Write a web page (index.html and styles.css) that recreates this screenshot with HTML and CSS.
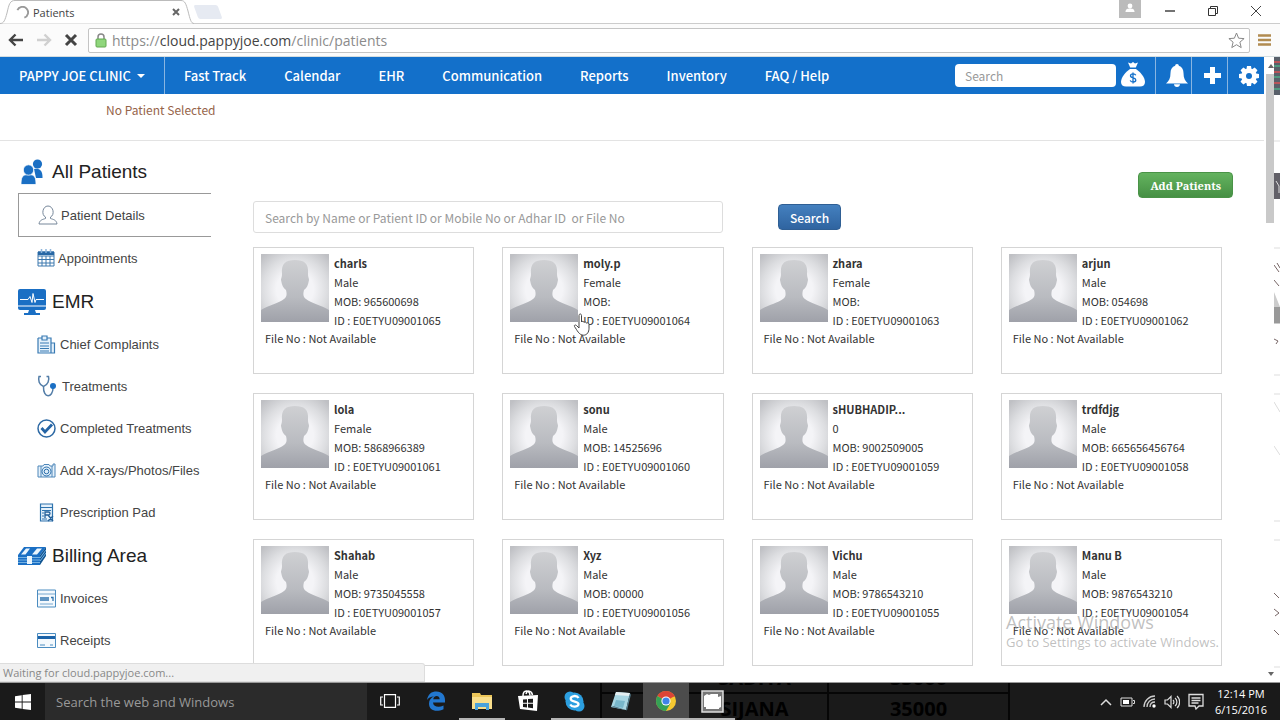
FILE: index.html
```html
<!DOCTYPE html>
<html lang="en">
<head>
<meta charset="utf-8">
<title>Patients</title>
<link rel="stylesheet" href="styles.css">
</head>
<body class="desktop">
<svg class="defs" aria-hidden="true">
  <defs>
    <radialGradient id="glow" cx="50%" cy="52%" r="68%"><stop offset="0.4" stop-color="#f4f4f7"/><stop offset="0.7" stop-color="#dcdde0"/><stop offset="1" stop-color="#bfc0c4"/></radialGradient>
    <linearGradient id="body" x1="0" y1="0" x2="0" y2="1"><stop offset="0" stop-color="#cfd0d3"/><stop offset="0.6" stop-color="#b9bbc0"/><stop offset="1" stop-color="#9fa1a9"/></linearGradient>
  </defs>
  <symbol id="avatar" viewBox="0 0 68 68"><rect width="68" height="68" fill="url(#glow)"/><path d="M0 68V56C8 51 18 49 23 45C26 43 26 40 25 36C22 34 21 31 20 26C20 24 21 23 21 20C20 9 25 6 34 6C43 6 48 9 47 20C47 23 48 24 48 26C47 31 46 34 43 36C42 40 42 43 45 45C50 49 60 51 68 56V68Z" fill="url(#body)"/></symbol>
</svg>

<div class="browser">
  <header class="tabs">
    <div class="tab">
      <svg class="tab-shape" viewBox="0 0 194 24" preserveAspectRatio="none"><path d="M0 23.500C4 23.500 5 20 7 13C9 4 10 .5 15 .5H181C185 .5 186 4 188 11C190 19 191 23.500 194 23.500" fill="#fff" stroke="#bbb"/></svg>
      <svg class="spinner" viewBox="0 0 14 14"><path d="M1.500 4.500A6 6 0 1 1 9 12.500" fill="none" stroke="#999" stroke-width="2"/></svg>
      <span>Patients</span>
      <button class="plain tab-close" aria-label="Close tab"><svg width="8" height="8" viewBox="0 0 8 8"><path d="M1 1l6 6M7 1l-6 6" stroke="#666" stroke-width="2"/></svg></button>
    </div>
    <button class="plain new-tab" aria-label="New tab"></button>
    <div class="window-buttons">
      <button class="plain user" aria-label="User"><svg width="22" height="18" viewBox="0 0 22 18"><rect width="22" height="18" fill="#bbb"/><circle cx="11" cy="6" r="2.400" fill="#fff"/><path d="M6.500 12c0-3 2-3.500 4.500-3.500s4.500.5 4.500 3.500z" fill="#fff"/></svg></button>
      <button class="plain" aria-label="Minimize"><svg width="12" height="12" viewBox="0 0 12 12"><path d="M1 6h10" stroke="#444" stroke-width="1.500"/></svg></button>
      <button class="plain" aria-label="Restore"><svg width="12" height="12" viewBox="0 0 12 12"><path d="M1.500 3.500h7v7h-7zM3.500 3V1.500h7v7H9" fill="none" stroke="#333"/></svg></button>
      <button class="plain" aria-label="Close"><svg width="12" height="12" viewBox="0 0 12 12"><path d="M1 1l10 10M11 1L1 11" stroke="#444"/></svg></button>
    </div>
  </header>

  <div class="toolbar">
    <button class="plain" aria-label="Back"><svg width="16" height="14" viewBox="0 0 16 14"><path d="M15 7H2M7.500 1.500L2 7l5.500 5.500" fill="none" stroke="#444" stroke-width="2.400"/></svg></button>
    <button class="plain" aria-label="Forward"><svg width="16" height="14" viewBox="0 0 16 14"><path d="M1 7h13M8.500 1.500L14 7l-5.500 5.500" fill="none" stroke="#d0d0d0" stroke-width="2.400"/></svg></button>
    <button class="plain" aria-label="Stop"><svg width="14" height="14" viewBox="0 0 14 14"><path d="M2 2l10 10M12 2L2 12" stroke="#444" stroke-width="3"/></svg></button>
    <div class="address">
      <svg width="12" height="15" viewBox="0 0 12 15"><path d="M3 7V4a3 3 0 0 1 6 0v3" fill="none" stroke="#888" stroke-width="1.500"/><rect x="1" y="6" width="10" height="8" rx="1" fill="#8fd67c" stroke="#62a850"/></svg>
      <span class="url"><i>https://</i>cloud.pappyjoe.com<i>/clinic/patients</i></span>
      <button class="plain" aria-label="Bookmark"><svg width="17" height="17" viewBox="0 0 17 17"><path d="M8.500 1l2.100 5.200 5.500.4-4.200 3.600 1.300 5.400-4.700-2.900-4.700 2.900 1.300-5.400L.9 6.600l5.500-.4z" fill="#fff" stroke="#888"/></svg></button>
    </div>
    <button class="plain menu" aria-label="Menu"><svg width="13" height="12" viewBox="0 0 13 12"><path d="M0 1.500h13M0 6h13M0 10.500h13" stroke="#b18b50" stroke-width="2.500"/></svg></button>
  </div>

  <div class="viewport">
    <div class="page">
      <nav class="nav">
        <button class="plain clinic">PAPPY JOE CLINIC <span class="caret"></span></button>
        <div class="links"><a href="#">Fast Track</a><a href="#">Calendar</a><a href="#">EHR</a><a href="#">Communication</a><a href="#">Reports</a><a href="#">Inventory</a><a href="#">FAQ / Help</a></div>
        <input class="nav-search" type="text" placeholder="Search" aria-label="Search">
        <button class="plain tool wide" aria-label="Payments"><svg width="26" height="26" viewBox="0 0 26 26"><path d="M8 1.500l3 1 2-1.500 2 1.500 3-1-2.200 5h-5.600z" fill="#fff"/><path d="M10 8h6c4 3 9 8 9 13 0 3-2 4.500-5 4.500H6c-3 0-5-1.500-5-4.500 0-5 5-10 9-13z" fill="#fff"/><path d="M15.800 14.200c-.5-1-1.500-1.300-2.700-1.300-1.500 0-2.600.7-2.600 1.900 0 2.900 5.300 1.300 5.300 4.200 0 1.200-1.100 2-2.700 2-1.400 0-2.500-.5-2.900-1.600M13 11.500v11" fill="none" stroke="#1370ca" stroke-width="1.300"/></svg></button>
        <button class="plain tool" aria-label="Notifications"><svg width="22" height="23" viewBox="0 0 22 23"><path d="M11 0c1.200 0 1.800.8 1.800 1.800C16 2.700 17.500 5.500 17.500 9c0 5 1.500 8 4.500 10.500H0C3 17 4.500 14 4.500 9c0-3.500 1.500-6.300 4.700-7.200C9.200.8 9.800 0 11 0zM8 20.300h6c0 1.500-1.300 2.700-3 2.700s-3-1.200-3-2.700z" fill="#fff"/></svg></button>
        <button class="plain tool" aria-label="Add"><svg width="19" height="19" viewBox="0 0 19 19"><path d="M7 1h5v6h6v5h-6v6H7v-6H1V7h6z" fill="#fff"/></svg></button>
        <button class="plain tool" aria-label="Settings"><svg width="20" height="20" viewBox="0 0 20 20"><g fill="#fff"><circle cx="10" cy="10" r="7.600"/><path id="tooth" d="M8 0h4l.7 4H7.300zM8 20h4l.7-4H7.300z"/><use href="#tooth" transform="rotate(45 10 10)"/><use href="#tooth" transform="rotate(90 10 10)"/><use href="#tooth" transform="rotate(135 10 10)"/></g><circle cx="10" cy="10" r="3" fill="#1370ca"/></svg></button>
      </nav>
      <div class="selection">No Patient Selected</div>

      <div class="content">
        <aside class="sidebar">
          <h2><svg width="28" height="26" viewBox="0 0 28 26"><g fill="#1a6fc4"><circle cx="19.500" cy="5" r="4.600"/><path d="M16 10c5-1 8.500 1 8.500 8v1H18z"/></g><g fill="#1a6fc4" stroke="#fff" stroke-width=".8"><path d="M3 25.500c0-7 1-10 7.500-10S18 18.500 18 25.500z"/><circle cx="10.500" cy="11" r="5.200"/></g></svg>All Patients</h2>
          <ul>
            <li><a class="active" href="#"><svg width="20" height="20" viewBox="0 0 20 20"><path d="M7.500 12C3 10 4.500 1 10 1s7 9 2.500 11v1.500c3 1 6 1.500 6.500 5.500H1c.5-4 3.500-4.500 6.500-5.500z" fill="none" stroke="#76879a"/></svg>Patient Details</a></li>
            <li><a href="#"><svg class="tight" width="18" height="18" viewBox="0 0 18 18"><path d="M1 3h16v14H1zM1 7h16M1 10.500h16M1 14h16M5 7v10M9 7v10M13 7v10" fill="none" stroke="#3c78ae"/><path d="M1 2.500h16V6H1z" fill="#2767a5"/><path d="M4.500 0v4M9 0v4M13.500 0v4" stroke="#8db5dc" stroke-width="1.500"/></svg>Appointments</a></li>
          </ul>
          <h2><svg width="28" height="26" viewBox="0 0 28 26"><path d="M2 0h24a2 2 0 0 1 2 2v17a2 2 0 0 1-2 2H2a2 2 0 0 1-2-2V2a2 2 0 0 1 2-2zM11 21h6l1 3h4v2H6v-2h4z" fill="#1a6fc4"/><path d="M2 10.500h8l2-3 2 6 1-9 2 9 1-3h8M0 17h28" fill="none" stroke="#fff"/></svg>EMR</h2>
          <ul>
            <li><a href="#"><svg width="19" height="19" viewBox="0 0 19 19"><path d="M1 3h4M10 3h4v15H1V3M5 1h5v4H5zM14 8h3.500v10H14M3 8h9M3 11h9M3 13.500h9M3 16h9" fill="#e5f1fb" stroke="#387ab3" stroke-width="1.200"/></svg>Chief Complaints</a></li>
            <li><a href="#"><svg class="loose" width="20" height="22" viewBox="0 0 20 22"><path d="M4 1.500H2C1 5 2 10 6.500 11.500C11 10 12.500 5 11.500 1.500H9.500M6.500 11.500C6 24 16 23 16 13" fill="none" stroke="#547ea8" stroke-width="1.500"/><circle cx="16" cy="11" r="3" fill="#1a6fc4"/></svg>Treatments</a></li>
            <li><a href="#"><svg width="19" height="19" viewBox="0 0 19 19"><circle cx="9.500" cy="9.500" r="8.500" fill="#fff" stroke="#2d69a4" stroke-width="1.500"/><path d="M4.500 9l3.500 4 7-7.500" fill="none" stroke="#2564a5" stroke-width="2.800"/></svg>Completed Treatments</a></li>
            <li><a href="#"><svg width="19" height="15" viewBox="0 0 19 15"><path d="M1 3h5l1-1.500h5L13 3h3V1h2v13H1zM4 3v11M15 3v11" fill="#e5f1fb" stroke="#4f87b9"/><circle cx="9.500" cy="8.500" r="4.500" fill="#dcecf8" stroke="#2d70ad"/><circle cx="9.500" cy="8.500" r="2.300" fill="none" stroke="#2d70ad"/></svg>Add X-rays/Photos/Files</a></li>
            <li><a href="#"><svg width="19" height="19" viewBox="0 0 19 19"><path d="M3.500 1h12v17h-12zM3 4.500h13M5 7.500h9M5 10h2M5 13h2M5 16h5" fill="#e5f1fb" stroke="#2e73ae" stroke-width="1.200"/><path d="M8 15V9h3.500c2 0 2 3 0 3H8m3 0l5 6m0-5l-5 5" fill="none" stroke="#235f99" stroke-width="1.300"/></svg>Prescription Pad</a></li>
          </ul>
          <h2><svg width="28" height="18" viewBox="0 0 28 18"><path d="M0 8L6 0h22l-6 8v10H0z" fill="#1a6fc4"/><path d="M22 8l6-8v9l-6 9z" fill="#125591"/><path d="M3 7.500L8 1.500h4L7.500 7.500zM14 7.500l5-6h5l-5 6zM9 9h5v8H9z" fill="#eaf5fd"/><path d="M0 10.500h9M0 13h9M0 15.500h9M14 10.500h8M14 13h8M14 15.500h8M22 11l6-8M22 14l6-8" stroke="#75b1e2"/></svg>Billing Area</h2>
          <ul>
            <li><a href="#"><svg width="19" height="19" viewBox="0 0 19 19"><path d="M.5 1h18v17H.5z" fill="#f4f9fd" stroke="#4b8cc0"/><path d="M1 5h17M3 15h13" stroke="#76a8d0"/><path d="M3 9h9M3 11h9M14 8.500h2V12" fill="none" stroke="#2e73ae" stroke-width="1.300"/></svg>Invoices</a></li>
            <li><a href="#"><svg width="19" height="15" viewBox="0 0 19 15"><path d="M.5.5h18v14H.5z" fill="#f4f9fd" stroke="#4b8cc0"/><path d="M1 4.500h17" stroke="#1a62a8" stroke-width="3"/><path d="M3 12h5M13 12h3" stroke="#4b8cc0"/></svg>Receipts</a></li>
          </ul>
        </aside>

        <main class="main">
          <div class="actions"><button class="btn add">Add Patients</button></div>
          <form class="finder"><input type="text" aria-label="Find patients" placeholder="Search by Name or Patient ID or Mobile No or Adhar ID  or File No"><button class="btn find" type="button">Search</button></form>
          <section class="cards">
            <article class="card"><svg class="avatar"><use href="#avatar"/></svg><div class="info"><b>charls</b><span>Male</span><span>MOB: 965600698</span><span>ID : E0ETYU09001065</span></div><p>File No : Not Available</p></article>
            <article class="card"><svg class="avatar"><use href="#avatar"/></svg><div class="info"><b>moly.p</b><span>Female</span><span>MOB:</span><span>ID : E0ETYU09001064</span></div><p>File No : Not Available</p></article>
            <article class="card"><svg class="avatar"><use href="#avatar"/></svg><div class="info"><b>zhara</b><span>Female</span><span>MOB:</span><span>ID : E0ETYU09001063</span></div><p>File No : Not Available</p></article>
            <article class="card"><svg class="avatar"><use href="#avatar"/></svg><div class="info"><b>arjun</b><span>Male</span><span>MOB: 054698</span><span>ID : E0ETYU09001062</span></div><p>File No : Not Available</p></article>
            <article class="card"><svg class="avatar"><use href="#avatar"/></svg><div class="info"><b>lola</b><span>Female</span><span>MOB: 5868966389</span><span>ID : E0ETYU09001061</span></div><p>File No : Not Available</p></article>
            <article class="card"><svg class="avatar"><use href="#avatar"/></svg><div class="info"><b>sonu</b><span>Male</span><span>MOB: 14525696</span><span>ID : E0ETYU09001060</span></div><p>File No : Not Available</p></article>
            <article class="card"><svg class="avatar"><use href="#avatar"/></svg><div class="info"><b>sHUBHADIP...</b><span>0</span><span>MOB: 9002509005</span><span>ID : E0ETYU09001059</span></div><p>File No : Not Available</p></article>
            <article class="card"><svg class="avatar"><use href="#avatar"/></svg><div class="info"><b>trdfdjg</b><span>Male</span><span>MOB: 665656456764</span><span>ID : E0ETYU09001058</span></div><p>File No : Not Available</p></article>
            <article class="card"><svg class="avatar"><use href="#avatar"/></svg><div class="info"><b>Shahab</b><span>Male</span><span>MOB: 9735045558</span><span>ID : E0ETYU09001057</span></div><p>File No : Not Available</p></article>
            <article class="card"><svg class="avatar"><use href="#avatar"/></svg><div class="info"><b>Xyz</b><span>Male</span><span>MOB: 00000</span><span>ID : E0ETYU09001056</span></div><p>File No : Not Available</p></article>
            <article class="card"><svg class="avatar"><use href="#avatar"/></svg><div class="info"><b>Vichu</b><span>Male</span><span>MOB: 9786543210</span><span>ID : E0ETYU09001055</span></div><p>File No : Not Available</p></article>
            <article class="card"><svg class="avatar"><use href="#avatar"/></svg><div class="info"><b>Manu B</b><span>Male</span><span>MOB: 9876543210</span><span>ID : E0ETYU09001054</span></div><p>File No : Not Available</p></article>
          </section>
        </main>
      </div>
    </div>
    <div class="scrollbar"><span class="arrow up"></span><div class="thumb"></div><span class="arrow down"></span></div>
    <svg class="edge" viewBox="0 0 6 626" preserveAspectRatio="xMidYMin slice"><path d="M0 0h6v38H0z" fill="#59606a"/><path d="M0 5h6M0 15h6M0 26h6" stroke="#b8555a" stroke-width="2"/><path d="M0 9h6M0 20h6M0 32h6" stroke="#4f9a80" stroke-width="2"/><path d="M0 116h6v26H0z" fill="#626068"/><path d="M2 124l3 5v7" fill="none" stroke="#ddd"/><path d="M0 84h6M0 191h6M0 318h6M0 337h6M0 464h6M0 483h6M0 610h6" stroke="#ddd"/><path d="M0 208l5 7M3 206l3 5M0 223l5 6M0 282l4 2-2 3M0 536l5 5M0 552l5 4-4 3M0 573l5 5" fill="none" stroke="#766" /><path d="M0 235l6 15v17H0z" fill="#ccc"/><path d="M0 250h6v16H0z" fill="#999"/><path d="M0 345l6 10M0 389l6 9" stroke="#ddd"/></svg>
  </div>

  <div class="status">Waiting for cloud.pappyjoe.com...</div>
  <div class="watermark"><strong>Activate Windows</strong><span>Go to Settings to activate Windows.</span></div>
  <svg class="cursor" viewBox="0 0 18 23"><path d="M6 12V2.500C6 .5 8.500.5 8.500 2.500V9c.5-1 2.300-1 2.500.5.500-1 2.300-.6 2.500.700.500-.8 2.500-.5 2.500 1v4c0 4-2 7-5.500 7C6 22.200 4 17 1.500 13.500.8 12 2.500 11.500 3.500 12.500L6 15z" fill="#fff" stroke="#444"/></svg>
</div>

<footer class="taskbar">
  <table class="ghost" aria-hidden="true"><tr><td>SADIYA</td><td>35000</td></tr><tr><td>SIJANA</td><td>35000</td></tr></table>
  <button class="plain start" aria-label="Start"><svg width="16" height="16" viewBox="0 0 16 16"><path d="M0 2.200L6.700 1.200V7.500H0zM7.600 1.100L16 0v7.500H7.600zM0 8.400h6.700v6.400L0 13.800zM7.600 8.400H16V16l-8.400-1.100z" fill="#fff"/></svg></button>
  <input class="task-search" type="text" placeholder="Search the web and Windows" aria-label="Search the web and Windows">
  <div class="apps">
    <button class="plain app" aria-label="Task View"><svg width="20" height="14" viewBox="0 0 20 14"><path d="M4.500.700h11v12.600h-11zM3 3H.700v8H3M17 3h2.300v8H17" fill="none" stroke="#fff" stroke-width="1.200"/></svg></button>
    <button class="plain app" aria-label="Edge"><svg width="20" height="20" viewBox="0 0 20 20"><path d="M1 9C2 3 5.500.5 10.500.5 16 .5 19 4.500 19 9v2.500H7c.3 4.500 6 5.500 10.500 3v3.700C10 21.500 3 19.500 3 12.500 3 9 5 6.700 8 5.500 4.500 5.500 2.500 7 1 9zm6.200-.7h6.500C13.500 4 8 4 7.200 8.300z" fill="#2277cf"/></svg></button>
    <button class="plain app open" aria-label="File Explorer"><svg width="22" height="19" viewBox="0 0 22 19"><path d="M1 1h8l1 2h11v14H1z" fill="#ecc659"/><path d="M1 5h20v12H1z" fill="#f9df8c"/><path d="M4 11h14v7h-3v-3H7v3H4z" fill="#4aa3dc"/></svg></button>
    <button class="plain app" aria-label="Store"><svg width="20" height="22" viewBox="0 0 20 22"><path d="M0 6l20-1-1 16-17-2z" fill="#fff"/><path d="M5 6C5-.5 11.500-.5 12 5.500M8 4C9 0 13.500 0 14.500 5" fill="none" stroke="#fff" stroke-width="1.500"/><path d="M5 9.500l4-.3v3.600H5zM10 9.100l5-.4v4.100h-5zM5 13.800h4v3.600l-4-.4zM10 13.800h5v4.400l-5-.6z" fill="#1a1a1a"/></svg></button>
    <button class="plain app open" aria-label="Skype"><svg width="21" height="21" viewBox="0 0 21 21"><g fill="#2c9fe0"><circle cx="10.500" cy="10.500" r="9"/><circle cx="6" cy="6" r="5.500"/><circle cx="15" cy="15" r="5.500"/></g><path d="M14.500 7C13 4 6.700 4.500 6.700 7.700c0 3.800 7.800 2 7.800 5.400 0 3-6.500 3.500-8.300.4" fill="none" stroke="#fff" stroke-width="2.300"/></svg></button>
    <button class="plain app open" aria-label="Notepad"><svg width="21" height="20" viewBox="0 0 21 20"><path d="M6 1l14 1-4 17L1 16z" fill="#a8d6e3"/><path d="M6 1l14 1-.7 3L5 4z" fill="#e4eef1"/><path d="M16 19l4-17 .8 2-3.800 15.500zM1 16l3-1 12 4z" fill="#547f91"/><path d="M6 9l9 1-2 7-9-2z" fill="#78b7cb"/></svg></button>
    <button class="plain app open current" aria-label="Chrome"><svg width="20" height="20" viewBox="0 0 20 20"><circle cx="10" cy="10" r="10" fill="#f6c830"/><path d="M10 10L1.340 5A10 10 0 0 1 18.660 5z" fill="#dc4537"/><path d="M1.340 5A10 10 0 0 0 10 20l4.300-7.500L10 10z" fill="#35a156"/><path d="M10 5.500h8.900l-.3-.5L10 2z" fill="#dc4537"/><circle cx="10" cy="10" r="4.600" fill="#fff"/><circle cx="10" cy="10" r="3.600" fill="#3f83e8"/></svg></button>
    <button class="plain app open" aria-label="Recorder"><svg width="23" height="23" viewBox="0 0 23 23"><path d="M1 1h21v21H1z" fill="#777" stroke="#ddd" stroke-width="1.500"/><path d="M3 6l3-2 2 1 2-1h7v3l3-1v11l-2 1v1H5v-2H3z" fill="#fff"/></svg></button>
  </div>
  <div class="tray">
    <svg width="12" height="8" viewBox="0 0 12 8"><path d="M1 7l5-5 5 5" fill="none" stroke="#ddd" stroke-width="1.500"/></svg>
    <svg width="15" height="10" viewBox="0 0 15 10"><path d="M1 1h11v8H1zM13 3.500h1.500v3H13" fill="none" stroke="#ddd"/><path d="M3 3h6v4H3z" fill="#fff"/></svg>
    <svg width="13" height="13" viewBox="0 0 13 13"><path d="M1 12C1 6 6 1 12 1M4 12c0-4.500 3.500-8 8-8M7 12c0-3 2-5 5-5" fill="none" stroke="#ccc" stroke-width="1.300"/><circle cx="11" cy="11" r="1.700" fill="#fff"/></svg>
    <svg width="16" height="14" viewBox="0 0 16 14"><path d="M1 5h2.500L7 1.500v11L3.500 9H1zM9 5c1.200 1 1.200 3 0 4M11 3c2.500 2 2.500 6 0 8M13 1c3.500 3 3.500 9 0 12" fill="none" stroke="#ddd" stroke-width="1.200"/></svg>
    <svg width="16" height="17" viewBox="0 0 16 17"><path d="M1 1.500h14v11.500h-4l-3 3-1-3H1zM3.500 5h9M3.500 7.500h9M3.500 10h7" fill="none" stroke="#ddd" stroke-width="1.300"/></svg>
    <div class="clock"><span>12:14 PM</span><span>6/15/2016</span></div>
  </div>
</footer>
</body>
</html>
```
FILE: styles.css
```css
* { box-sizing: border-box; }

:root {
  --page-font: "Noto Sans CJK SC", "Open Sans", sans-serif;
  --system-font: "Open Sans", "Noto Sans", sans-serif;
  --side-font: "Liberation Sans", Arial, sans-serif;
  --blue: #1370ca;
}

.desktop {
  margin: 0;
  height: 100vh;
  display: flex;
  flex-direction: column;
  overflow: hidden;
  background: #fff;
  font-family: var(--page-font);
  font-size: 12px;
}

.defs { position: absolute; width: 0; height: 0; }

.plain {
  display: flex;
  align-items: center;
  justify-content: center;
  padding: 0;
  border: 0;
  background: none;
  font: inherit;
  color: inherit;
}

/* Browser frame */
.browser {
  position: relative;
  flex: 1;
  min-height: 0;
  display: flex;
  flex-direction: column;
  border-bottom: 1px solid #999;
}

.tabs {
  flex: none;
  display: flex;
  height: 24px;
  border-bottom: 1px solid #ccc;
  font-family: var(--system-font);
  font-size: 11px;
  color: #444;
}

.tab {
  position: relative;
  display: flex;
  align-items: center;
  gap: 4px;
  width: 194px;
  height: 24px;
  padding: 0 14px 0 16px;
}

.tab-shape { position: absolute; inset: 0; width: 100%; height: 100%; }
.tab > :not(.tab-shape) { position: relative; }
.spinner { width: 13px; height: 13px; }
.tab-close { margin-left: auto; }

.new-tab {
  align-self: center;
  width: 24px;
  height: 14px;
  margin-left: 2px;
  border-radius: 2px;
  background: #e6eaf2;
  transform: skewX(20deg);
}

.window-buttons {
  display: flex;
  align-items: center;
  gap: 31px;
  height: 22px;
  margin-left: auto;
  padding-right: 18px;
}

.user { align-self: flex-start; margin-right: -8px; }

.toolbar {
  flex: none;
  display: flex;
  align-items: center;
  gap: 12px;
  height: 33px;
  padding: 0 9px 0 8px;
  border-bottom: 1px solid #d4dde0;
  background: #fbfbfb;
}

.address {
  flex: 1;
  display: flex;
  align-items: center;
  gap: 5px;
  height: 25px;
  margin-left: -2px;
  margin-right: -4px;
  padding: 0 4px 0 6px;
  border: 1px solid #c4c4c4;
  border-radius: 2px;
  background: #fff;
  font-family: var(--system-font);
  font-size: 14px;
  color: #444;
}

.url { flex: 1; }
.url i { font-style: normal; color: #8b8b8b; }

.viewport { flex: 1; min-height: 0; display: flex; }
.page { flex: 1; min-width: 0; overflow: hidden; }

.scrollbar {
  display: flex;
  flex-direction: column;
  align-items: flex-end;
  width: 10px;
  padding: 7px 0 6px;
}

.thumb { width: 8px; height: 149px; margin-top: 6px; background: #c9c9c9; }
.arrow { width: 6px; height: 4px; background: #666; }
.up { clip-path: polygon(50% 0, 100% 100%, 0 100%); }
.down { margin-top: auto; clip-path: polygon(0 0, 100% 0, 50% 100%); }
.edge { width: 6px; height: 100%; }

/* Clinic navigation */
.nav {
  display: flex;
  align-items: center;
  height: 37px;
  background: var(--blue);
  color: #fff;
  font-size: 13px;
  font-weight: 500;
}

.clinic {
  height: 100%;
  gap: 6px;
  padding: 0 19px;
  border-right: 1px solid #89b5e1;
}

.caret { border: 4px solid transparent; border-top-color: #fff; border-bottom: 0; }
.links { display: flex; gap: 38px; padding-left: 19px; }
.links a { color: inherit; text-decoration: none; white-space: nowrap; }

input { min-width: 0; font-family: var(--page-font); }
input::placeholder { color: #999; opacity: 1; }

.nav-search {
  width: 161px;
  height: 23px;
  margin-left: auto;
  padding: 0 10px;
  border: 0;
  border-radius: 4px;
  font-size: 12px;
}

.tool { width: 36px; height: 100%; border-left: 1px solid #89b5e1; padding-left: 6px; }
.tool:last-child { width: 37px; }
.tool.wide { width: 39px; padding: 0 6px 4px 0; border-left: 0; }

.selection {
  height: 47px;
  padding: 7px 0 0 106px;
  border-bottom: 1px solid #e3e3e3;
  color: #96644a;
  font-size: 12px;
  line-height: 18px;
}

/* Sidebar */
.content { display: flex; }

.sidebar {
  flex: none;
  width: 211px;
  padding: 9px 0 0 18px;
  font-family: var(--side-font);
  color: #222;
}

.sidebar h2 {
  display: flex;
  align-items: center;
  gap: 6px;
  height: 43px;
  margin: 0;
  font-size: 19px;
  font-weight: 400;
}

.sidebar ul { margin: 0; padding: 0 0 1px; list-style: none; }

.sidebar a {
  display: flex;
  align-items: center;
  gap: 4px;
  height: 42px;
  padding-left: 19px;
  color: #444;
  font-size: 13px;
  text-decoration: none;
  white-space: nowrap;
}

.sidebar a.active { height: 44px; gap: 3px; border: 1px solid #999; border-right: 0; }
.tight { margin-right: -1px; }
.loose { margin-right: 1px; }

/* Patient list */
.main { flex: 1; min-width: 0; padding: 31px 42px 0; }
.actions { display: flex; justify-content: flex-end; margin-right: -11px; }

.btn {
  height: 26px;
  padding: 0 11px;
  border: 1px solid #2f5f94;
  border-radius: 4px;
  color: #fff;
  background: linear-gradient(#4480bf, #2f64a0);
  font: 500 12px var(--page-font);
}

.add {
  border-color: #4a9347;
  background: linear-gradient(#64b35f, #469044);
  font: 700 11px "Noto Serif", "DejaVu Serif", serif;
}

.finder { display: flex; align-items: center; gap: 55px; margin-top: 3px; }

.finder input {
  width: 470px;
  height: 32px;
  padding: 0 11px;
  border: 1px solid #ddd;
  border-radius: 3px;
  font-size: 12px;
}

.cards {
  display: grid;
  grid-template-columns: repeat(4, 1fr);
  gap: 19px 28px;
  margin-top: 14px;
}

.card {
  display: grid;
  grid-template-columns: 68px 1fr;
  align-content: start;
  column-gap: 5px;
  height: 127px;
  padding: 6px 7px;
  border: 1px solid #d5d5d5;
  color: #333;
  font-size: 11px;
  line-height: 19px;
}

.avatar { width: 68px; height: 68px; }
.info { display: flex; flex-direction: column; height: 75px; white-space: nowrap; }
.info b { font-weight: 700; }
.card p { grid-column: 1 / -1; margin: 0 0 0 4px; }

/* Layers over the page */
.status {
  position: absolute;
  left: 0;
  bottom: 0;
  width: 425px;
  height: 19px;
  padding-left: 3px;
  border: 1px solid #ddd;
  border-left: 0;
  border-radius: 0 3px 0 0;
  background: #f0f0f0;
  color: #888;
  font: 11px/18px var(--system-font);
}

.watermark {
  position: absolute;
  right: 54px;
  bottom: 30px;
  width: 220px;
  display: flex;
  flex-direction: column;
  color: rgba(150, 150, 150, 0.6);
  font-family: var(--system-font);
  font-size: 13px;
  line-height: 20px;
}

.watermark strong { font-size: 18px; font-weight: 400; }
.cursor { position: absolute; left: 573px; top: 313px; width: 18px; height: 23px; }

/* Taskbar */
.taskbar {
  position: relative;
  flex: none;
  display: flex;
  align-items: stretch;
  height: 37px;
  background: #1a1a1a;
  overflow: hidden;
  color: #fff;
  font-family: var(--system-font);
}

.taskbar > :not(.ghost) { position: relative; }
.start { width: 45px; }

.task-search {
  width: 322px;
  padding: 0 11px;
  border: 0;
  background: #2b2b2b;
  color: #fff;
  font-family: var(--system-font);
  font-size: 13px;
}

.apps { display: flex; }
.app { width: 46px; padding-bottom: 1px; }
.app.open { box-shadow: inset 0 -2px #b5b5b5; }
.app.current { background: #4c4c4c; }

.tray {
  display: flex;
  align-items: center;
  gap: 8px;
  margin-left: auto;
  padding-right: 13px;
}

.clock {
  display: flex;
  flex-direction: column;
  align-items: center;
  margin-left: 3px;
  font-size: 11px;
  line-height: 16px;
}

.ghost {
  position: absolute;
  left: 600px;
  bottom: -5px;
  width: 410px;
  border-collapse: collapse;
  color: #000;
  font: 700 20px/29px var(--system-font);
  text-align: center;
}

.ghost td { padding: 0; border: 2px solid #060606; }
.ghost td:first-child { width: 227px; padding-left: 80px; }
```
